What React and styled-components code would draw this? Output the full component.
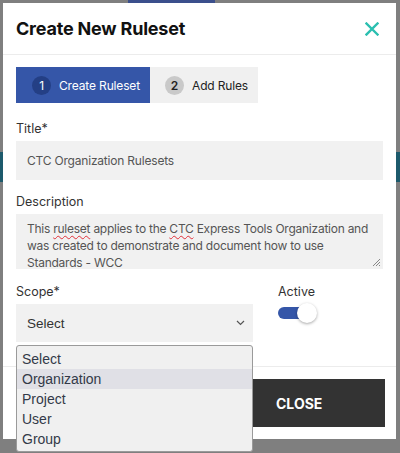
import * as React from 'react'
import styled, { createGlobalStyle } from 'styled-components'

const GlobalStyle = createGlobalStyle`
  html, body {
    margin: 0;
    padding: 0;
  }
  body {
    width: 400px;
    height: 453px;
    overflow: hidden;
    font-family: 'Inter', 'Open Sans', sans-serif;
    background:
      linear-gradient(#3b4f8c, #3b4f8c) 128px 0 / 87px 3px no-repeat,
      linear-gradient(to bottom, #7f7f7f 152px, #1d5a6c 152px, #1d5a6c 182px, #7f7f7f 182px);
  }
`

const Backdrop = styled.div`
  position: relative;
  width: 400px;
  height: 453px;
  padding: 3px 4px 0 3px;
  box-sizing: border-box;
`
const Modal = styled.div`
  position: relative;
  background: #fff;
  height: 436px;
  display: flex;
  flex-direction: column;
`
const Header = styled.div`
  height: 52px;
  flex-shrink: 0;
  border-bottom: 1px solid #ececec;
  display: flex;
  align-items: center;
  justify-content: space-between;
  padding: 0 17px 0 13px;
  box-sizing: border-box;
`
const Heading = styled.h2`
  margin: 0;
  font-size: 18px;
  font-weight: 700;
  color: #111;
  letter-spacing: -0.2px;
`
const CloseIcon = styled.button`
  border: 0;
  background: none;
  padding: 0;
  width: 14px;
  height: 14px;
  display: flex;
  cursor: pointer;
`
const Body = styled.div`
  padding: 12px 13px 0;
  display: flex;
  flex-direction: column;
`
const Steps = styled.div`
  display: flex;
  height: 36px;
  margin-bottom: 18px;
`
const Step = styled.div`
  display: flex;
  align-items: center;
  gap: 8px;
  padding: 0 0 0 ${p => (p.$active ? '16px' : '15px')};
  background: ${p => (p.$active ? '#3556a8' : '#f0f0f0')};
  color: ${p => (p.$active ? '#fff' : '#222')};
  font-size: 12px;
  letter-spacing: -0.15px;
  white-space: nowrap;
  width: ${p => p.$width}px;
  box-sizing: border-box;
`
const StepNum = styled.span`
  width: 19px;
  height: 19px;
  border-radius: 50%;
  background: ${p => (p.$active ? '#243f85' : '#c9c9c9')};
  color: ${p => (p.$active ? '#fff' : '#222')};
  display: flex;
  align-items: center;
  justify-content: center;
  font-size: 12px;
  font-weight: ${p => (p.$active ? 400 : 600)};
`
const Label = styled.label`
  display: block;
  font-size: 12.5px;
  line-height: 16px;
  color: #333;
  margin-bottom: 4px;
`
const Field = styled.div`
  margin-bottom: ${p => p.$gap || 14}px;
`
const Input = styled.div`
  height: 39px;
  background: #f1f1f1;
  display: flex;
  align-items: center;
  padding: 0 11px;
  font-size: 12px;
  letter-spacing: -0.2px;
  color: #555;
`
const TextArea = styled.div`
  position: relative;
  height: 55px;
  background: #f1f1f1;
  padding: 6px 11px 0;
  box-sizing: border-box;
  font-size: 12px;
  letter-spacing: -0.25px;
  line-height: 17px;
  color: #555;
  overflow: hidden;
  white-space: nowrap;
`
const Typo = styled.span`
  text-decoration: underline wavy #e0303a;
  text-decoration-thickness: 1px;
  text-underline-offset: 2px;
`
const Grip = styled.svg`
  position: absolute;
  right: 2px;
  bottom: 2px;
`
const Row = styled.div`
  display: flex;
  gap: 25px;
`
const SelectBox = styled.div`
  width: 237px;
  height: 38px;
  background: #f1f1f1;
  display: flex;
  align-items: center;
  justify-content: space-between;
  padding: 0 8px 0 11px;
  box-sizing: border-box;
  font-family: 'Liberation Sans', Arial, sans-serif;
  font-size: 13.5px;
  color: #333;
`
const Toggle = styled.div`
  position: relative;
  width: 40px;
  height: 22px;
  margin-top: -2px;
`
const Track = styled.div`
  position: absolute;
  left: 0;
  top: 5px;
  width: 28px;
  height: 12px;
  border-radius: 6px;
  background: #3556a8;
`
const Knob = styled.div`
  position: absolute;
  left: 19px;
  top: 1px;
  width: 20px;
  height: 20px;
  border-radius: 50%;
  background: #fff;
  box-shadow: 0 1px 3px rgba(0, 0, 0, 0.35);
`
const Footer = styled.div`
  margin-top: auto;
  border-top: 1px solid #ececec;
  padding: 12px 11px 12px 13px;
  display: flex;
  justify-content: flex-end;
`
const Button = styled.button`
  width: 174px;
  height: 48px;
  border: 0;
  background: #333;
  color: #fff;
  font-family: inherit;
  font-size: 14px;
  font-weight: 700;
  text-align: left;
  padding-left: 65px;
`
const Options = styled.ul`
  position: absolute;
  left: 13px;
  top: 342px;
  width: 237px;
  margin: 0;
  padding: 3px 0 2px;
  box-sizing: border-box;
  list-style: none;
  background: #f0f0f0;
  border: 1px solid #9a9a9a;
  border-radius: 3px;
  font-family: 'Liberation Sans', Arial, sans-serif;
  font-size: 14px;
  color: #333a48;
  z-index: 2;
`
const Option = styled.li`
  height: 20px;
  line-height: 20px;
  padding-left: 5px;
  background: ${p => (p.$hover ? '#e0e0e6' : 'transparent')};
`

const scopes = ['Select', 'Organization', 'Project', 'User', 'Group']

export default function App() {
  return (
    <Backdrop>
      <GlobalStyle />
      <Modal>
        <Header>
          <Heading>Create New Ruleset</Heading>
          <CloseIcon aria-label="close">
            <svg width="14" height="14" viewBox="0 0 14 14">
              <path d="M1.5 1.5 L12.5 12.5 M12.5 1.5 L1.5 12.5" stroke="#2bbfb0" strokeWidth="2.4" strokeLinecap="square" />
            </svg>
          </CloseIcon>
        </Header>
        <Body>
          <Steps>
            <Step $active $width={134}>
              <StepNum $active>1</StepNum>
              Create Ruleset
            </Step>
            <Step $width={108}>
              <StepNum>2</StepNum>
              Add Rules
            </Step>
          </Steps>
          <Field>
            <Label>Title*</Label>
            <Input>CTC Organization Rulesets</Input>
          </Field>
          <Field $gap={15}>
            <Label>Description</Label>
            <TextArea>
              This <Typo>ruleset</Typo> applies to the <Typo>CTC</Typo> Express Tools Organization and
              <br />
              was created to demonstrate and document how to use
              <br />
              Standards - <Typo>WCC</Typo>
              <Grip width="9" height="9" viewBox="0 0 9 9">
                <path d="M8 1 L1 8 M8 4 L4 8 M8 7 L7 8" stroke="#888" strokeWidth="1" />
              </Grip>
            </TextArea>
          </Field>
          <Row>
            <div>
              <Label>Scope*</Label>
              <SelectBox>
                Select
                <svg width="9" height="6" viewBox="0 0 9 6">
                  <path d="M1 1 L4.5 4.5 L8 1" stroke="#555" strokeWidth="1.2" fill="none" />
                </svg>
              </SelectBox>
            </div>
            <div>
              <Label>Active</Label>
              <Toggle>
                <Track />
                <Knob />
              </Toggle>
            </div>
          </Row>
        </Body>
        <Footer>
          <Button>CLOSE</Button>
        </Footer>
        <Options>
          {scopes.map((s, i) => (
            <Option key={s} $hover={i === 1}>{s}</Option>
          ))}
        </Options>
      </Modal>
    </Backdrop>
  )
}
